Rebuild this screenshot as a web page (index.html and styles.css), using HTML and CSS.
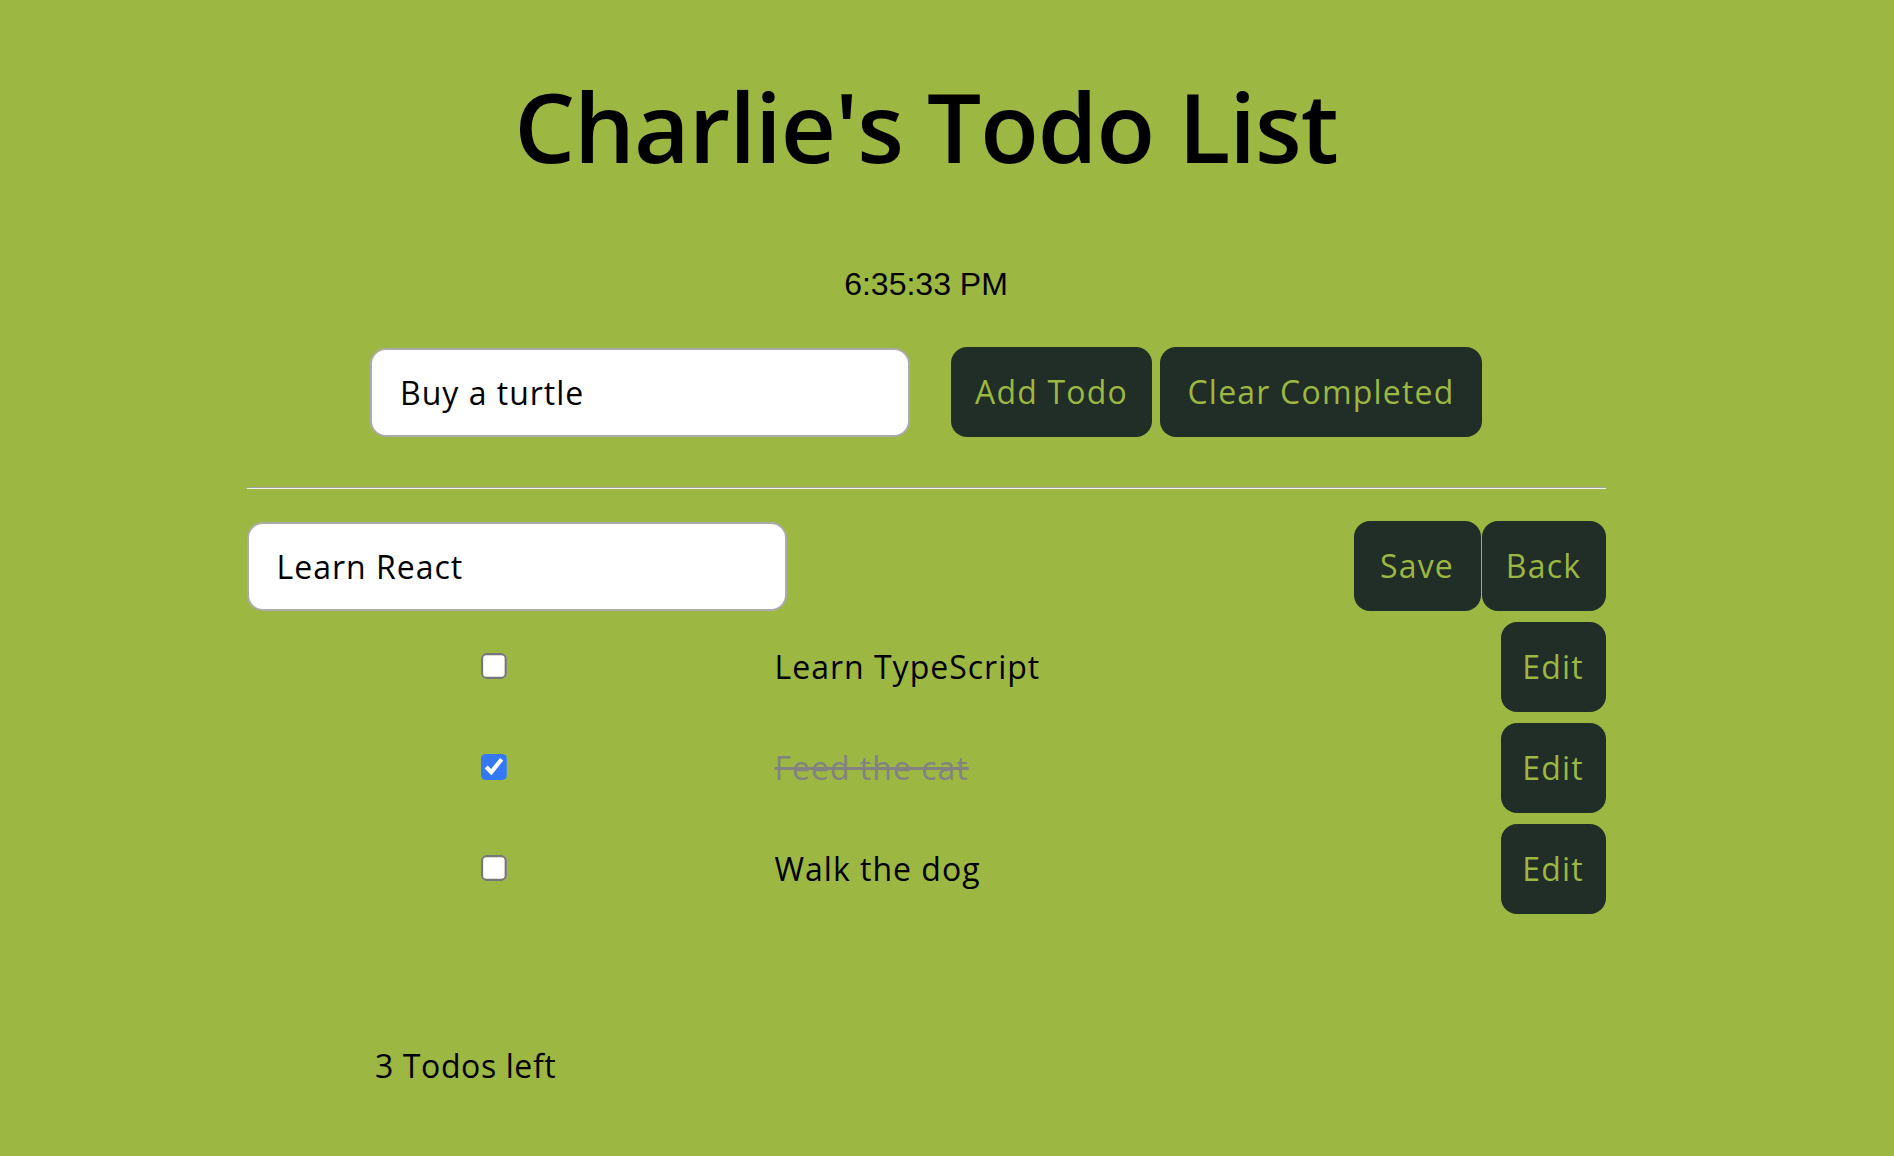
FILE: index.html
```html
<!DOCTYPE html>
<html lang="en">
<head>
<meta charset="utf-8">
<title>Charlie's Todo List</title>
<link rel="stylesheet" href="styles.css">
</head>
<body>
<main class="app">
  <h1 class="title">Charlie's Todo List</h1>
  <p class="clock">6:35:33 PM</p>
  <form class="add-form">
    <input class="text-field add-field" type="text" value="Buy a turtle">
    <button class="btn btn-add" type="button">Add Todo</button>
    <button class="btn btn-clear" type="button">Clear Completed</button>
  </form>
  <hr class="divider">
  <ul class="todos">
    <li class="todo-edit">
      <input class="text-field" type="text" value="Learn React">
      <div class="edit-actions">
        <button class="btn btn-save" type="button">Save</button>
        <button class="btn btn-back" type="button">Back</button>
      </div>
    </li>
    <li class="todo">
      <input class="check" type="checkbox">
      <span class="todo-text">Learn TypeScript</span>
      <button class="btn btn-edit" type="button">Edit</button>
    </li>
    <li class="todo">
      <input class="check" type="checkbox" checked>
      <span class="todo-text done">Feed the cat</span>
      <button class="btn btn-edit" type="button">Edit</button>
    </li>
    <li class="todo">
      <input class="check" type="checkbox">
      <span class="todo-text">Walk the dog</span>
      <button class="btn btn-edit" type="button">Edit</button>
    </li>
  </ul>
  <p class="count">3 Todos left</p>
</main>
</body>
</html>
```
FILE: styles.css
```css
html, body {
  margin: 0;
  padding: 0;
  background: #9cb742;
}

body {
  min-height: 1156px;
  font-family: "Open Sans", "Noto Sans", sans-serif;
  color: #000;
}

.app {
  width: 1852px;
  padding-top: 68px;
  box-sizing: border-box;
}

.title {
  margin: 0;
  font-size: 96px;
  line-height: 116px;
  font-weight: 600;
  text-align: center;
  letter-spacing: -1px;
}

.clock {
  margin: 82px 0 0;
  font-family: "Liberation Sans", Arial, sans-serif;
  font-size: 32px;
  line-height: 36px;
  text-align: center;
}

.add-form {
  margin-top: 45px;
  display: flex;
  justify-content: center;
  align-items: center;
  gap: 8px;
}

.text-field {
  box-sizing: border-box;
  width: 540px;
  height: 89px;
  padding: 0 28px;
  border: 2px solid #ababab;
  border-radius: 16px;
  background: #fff;
  font-family: inherit;
  font-size: 32px;
  letter-spacing: 1px;
  color: #000;
  outline: none;
}

.add-field {
  margin-right: 33px;
}

.btn {
  box-sizing: border-box;
  height: 90px;
  padding: 0;
  border: none;
  border-radius: 16px;
  background: #212d27;
  color: #9cb742;
  font-family: inherit;
  font-size: 32px;
  line-height: 48px;
  letter-spacing: 1.2px;
  text-align: center;
  cursor: pointer;
}

.btn-add { width: 201px; }
.btn-clear { width: 322px; }
.btn-save { width: 127px; }
.btn-back { width: 124px; }
.btn-edit { width: 105px; }

.divider {
  width: 1359px;
  margin: 50px auto 0;
  height: 0;
  border: none;
  border-top: 1px solid #a2a2a8;
  border-bottom: 1px solid #f2f2f2;
}

.todos {
  list-style: none;
  width: 1359px;
  margin: 32px auto 0;
  padding: 0;
  display: flex;
  flex-direction: column;
  gap: 11px;
}

.todo-edit {
  display: flex;
  align-items: center;
  justify-content: space-between;
}

.edit-actions {
  display: flex;
  gap: 1px;
}

.todo {
  display: grid;
  grid-template-columns: 496px 1fr auto;
  column-gap: 32px;
  align-items: center;
}

.check {
  justify-self: center;
  zoom: 2.15;
  margin: 0 0 1px;
  accent-color: #3478f6;
}

.todo-text {
  font-size: 32px;
  line-height: 48px;
  letter-spacing: 1px;
}

.todo-text.done {
  color: #828282;
  text-decoration: line-through;
}

.count {
  margin: 128px 0 0 375px;
  font-size: 32px;
  line-height: 48px;
  letter-spacing: 0.6px;
}
```
